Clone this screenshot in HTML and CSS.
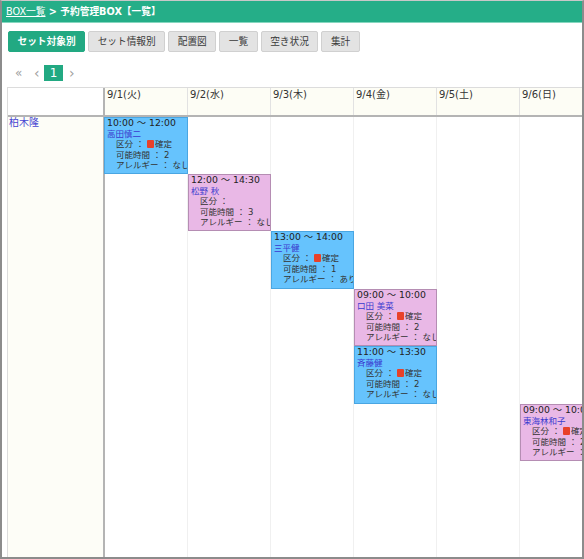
FILE: index.html
```html
<!DOCTYPE html>
<html lang="ja">
<head>
<meta charset="utf-8">
<title>予約管理BOX【一覧】</title>
<link rel="stylesheet" href="styles.css">
</head>
<body>
<div class="frame">
  <header class="topbar">
    <a class="crumb-link">BOX一覧</a><span class="crumb-cur"> &gt; 予約管理BOX【一覧】</span>
  </header>

  <nav class="tabs">
    <span class="tab active">セット対象別</span>
    <span class="tab">セット情報別</span>
    <span class="tab">配置図</span>
    <span class="tab">一覧</span>
    <span class="tab">空き状況</span>
    <span class="tab">集計</span>
  </nav>

  <div class="pager">
    <span class="pg pg-first">«</span>
    <span class="pg pg-prev">‹</span>
    <span class="pg pg-cur">1</span>
    <span class="pg pg-next">›</span>
  </div>

  <div class="sched">
    <div class="sched-head">
      <div class="hcell corner"></div>
      <div class="hcell">9/1(火)</div>
      <div class="hcell">9/2(水)</div>
      <div class="hcell">9/3(木)</div>
      <div class="hcell">9/4(金)</div>
      <div class="hcell">9/5(土)</div>
      <div class="hcell">9/6(日)</div>
      <div class="hcell">9/7(月)</div>
    </div>
    <div class="sched-body">
      <div class="name-cell"><a class="person">柏木隆</a></div>
      <div class="day-line d1"></div>
      <div class="day-line d2"></div>
      <div class="day-line d3"></div>
      <div class="day-line d4"></div>
      <div class="day-line d5"></div>
      <div class="day-line d6"></div>
      <div class="day-line d7"></div>

      <div class="ev blue d1 s1 first">
        <div class="ev-time">10:00 ～ 12:00</div>
        <div class="ev-name">高田慎二</div>
        <div class="ev-row">区分 ： <span class="tag"></span>確定</div>
        <div class="ev-row">可能時間 ： 2</div>
        <div class="ev-row">アレルギー ： なし</div>
      </div>

      <div class="ev pink d2 s2">
        <div class="ev-time">12:00 ～ 14:30</div>
        <div class="ev-name">松野 秋</div>
        <div class="ev-row">区分 ：</div>
        <div class="ev-row">可能時間 ： 3</div>
        <div class="ev-row">アレルギー ： なし</div>
      </div>

      <div class="ev blue d3 s3">
        <div class="ev-time">13:00 ～ 14:00</div>
        <div class="ev-name">三平健</div>
        <div class="ev-row">区分 ： <span class="tag"></span>確定</div>
        <div class="ev-row">可能時間 ： 1</div>
        <div class="ev-row">アレルギー ： あり</div>
      </div>

      <div class="ev pink d4 s4">
        <div class="ev-time">09:00 ～ 10:00</div>
        <div class="ev-name">口田 美菜</div>
        <div class="ev-row">区分 ： <span class="tag"></span>確定</div>
        <div class="ev-row">可能時間 ： 2</div>
        <div class="ev-row">アレルギー ： なし</div>
      </div>

      <div class="ev blue d4 s5">
        <div class="ev-time">11:00 ～ 13:30</div>
        <div class="ev-name">斉藤健</div>
        <div class="ev-row">区分 ： <span class="tag"></span>確定</div>
        <div class="ev-row">可能時間 ： 2</div>
        <div class="ev-row">アレルギー ： なし</div>
      </div>

      <div class="ev pink d6 s6">
        <div class="ev-time">09:00 ～ 10:00</div>
        <div class="ev-name">東海林和子</div>
        <div class="ev-row">区分 ： <span class="tag"></span>確定</div>
        <div class="ev-row">可能時間 ： 2</div>
        <div class="ev-row">アレルギー ： なし</div>
      </div>
    </div>
  </div>
</div>
</body>
</html>
```

FILE: styles.css
```css
* { box-sizing: border-box; }
html, body { margin: 0; padding: 0; background: #fff; }
body {
  font-family: "DejaVu Sans", "Noto Sans CJK JP", sans-serif;
  font-size: 10px;
  color: #333;
}

.frame {
  width: 584px;
  height: 559px;
  border: 2px solid #8c8c8c;
  border-top: 1px solid #c8c8c8;
  display: flex;
  flex-direction: column;
  overflow: hidden;
}

/* top breadcrumb bar */
.topbar {
  flex: none;
  height: 22px;
  background: #25ae88;
  border-bottom: 1px solid #86d7bf;
  padding-left: 4px;
  line-height: 21px;
  font-size: 9.7px;
  color: #fff;
  white-space: nowrap;
}
.crumb-link { color: #fff; text-decoration: underline; }
.crumb-cur { font-weight: bold; }

/* tabs */
.tabs {
  flex: none;
  display: flex;
  gap: 3px;
  margin: 8px 0 0 6px;
}
.tab {
  height: 21px;
  padding: 0 8.5px;
  line-height: 19px;
  font-size: 9.7px;
  border: 1px solid #d0d0d0;
  background: #e3e3e3;
  border-radius: 2px;
  color: #3a3a3a;
  white-space: nowrap;
}
.tab.active {
  background: #22a982;
  border-color: #22a982;
  color: #fff;
  font-weight: bold;
}

/* pager */
.pager {
  flex: none;
  display: flex;
  align-items: center;
  height: 16px;
  margin-top: 13px;
  padding-left: 13px;
  color: #a0a0a0;
}
.pg { display: block; line-height: 16px; }
.pg-first { width: 19px; font-size: 12px; }
.pg-prev { width: 10px; font-size: 14px; }
.pg-cur {
  width: 19px;
  height: 16px;
  background: #22a982;
  color: #fff;
  text-align: center;
  font-size: 12px;
}
.pg-next { margin-left: 6px; font-size: 14px; }

/* schedule table */
.sched {
  flex: 1;
  width: 680px;
  margin: 6px 0 0 5px;
  display: flex;
  flex-direction: column;
  border-left: 1px solid #dcdcdc;
  border-top: 1px solid #dcdcdc;
}
.sched-head {
  flex: none;
  display: grid;
  grid-template-columns: 97px repeat(7, 83px);
  height: 29px;
  border-bottom: 2px solid #b4b4b4;
}
.hcell {
  background: #fdfdf5;
  border-right: 1px solid #e2e2e2;
  padding: 1px 0 0 2px;
  line-height: 12px;
  color: #333;
  white-space: nowrap;
}
.hcell.corner {
  background: #fff;
  border-right: 2px solid #b4b4b4;
}

.sched-body {
  flex: 1;
  display: grid;
  grid-template-columns: 97px repeat(7, 83px);
  grid-template-rows: 57px 57px 58px 57px 58px 57px 1fr;
}
.name-cell {
  grid-column: 1;
  grid-row: 1 / -1;
  background: #fdfdf7;
  border-right: 2px solid #b4b4b4;
  padding-left: 1px;
  line-height: 12px;
}
.person { color: #4646d2; }

.day-line { grid-row: 1 / -1; border-right: 1px solid #f0f0f0; }
.d1 { grid-column: 2; }
.d2 { grid-column: 3; }
.d3 { grid-column: 4; }
.d4 { grid-column: 5; }
.d5 { grid-column: 6; }
.d6 { grid-column: 7; }
.d7 { grid-column: 8; }
.s1 { grid-row: 1; }
.s2 { grid-row: 2; }
.s3 { grid-row: 3; }
.s4 { grid-row: 4; }
.s5 { grid-row: 5; }
.s6 { grid-row: 6; }

/* events */
.ev {
  z-index: 1;
  border: 1px solid;
  overflow: hidden;
  white-space: nowrap;
  padding: 0 0 0 2px;
  font-size: 8.5px;
  line-height: 10.6px;
  color: #333;
}
.ev.first { margin-left: -1px; }
.ev.blue { background: #66c3fd; border-color: #4aa6e2; }
.ev.pink { background: #e9b8e6; border-color: #b58db3; }
.ev-time { font-size: 9.3px; color: #222; }
.ev-name { color: #3a3acf; }
.ev-row { padding-left: 9px; }
.tag {
  display: inline-block;
  width: 7px;
  height: 8px;
  background: #e8412a;
  border-radius: 1px;
  vertical-align: -1px;
  margin-right: 1px;
}
```
